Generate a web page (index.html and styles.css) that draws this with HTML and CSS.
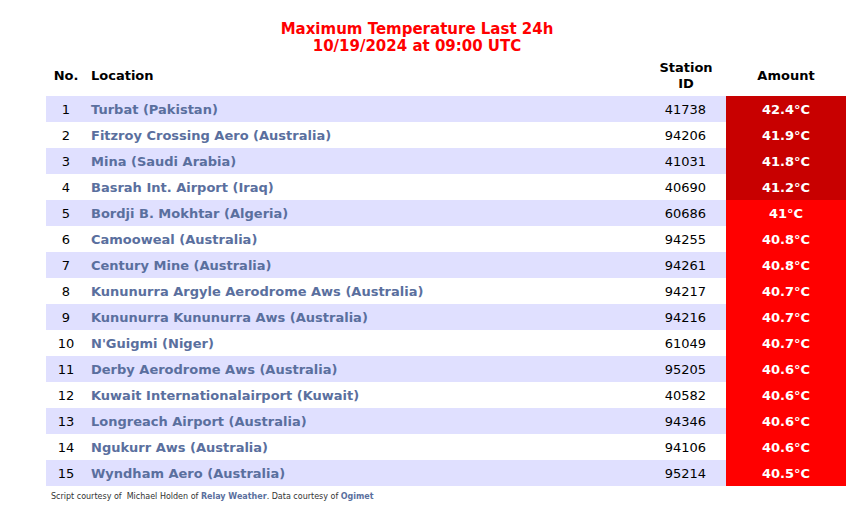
FILE: index.html
```html
<!DOCTYPE html>
<html>
<head>
<meta charset="utf-8">
<link rel="stylesheet" href="styles.css">
</head>
<body>
<div class="page">
  <h1 class="title">Maximum Temperature Last 24h<br>10/19/2024 at 09:00 UTC</h1>
  <table class="tbl">
    <thead>
      <tr>
        <th class="c-no">No.</th>
        <th class="c-loc">Location</th>
        <th class="c-id">Station<br>ID</th>
        <th class="c-amt">Amount</th>
      </tr>
    </thead>
    <tbody>
      <tr class="odd"><td class="c-no">1</td><td class="c-loc">Turbat (Pakistan)</td><td class="c-id">41738</td><td class="c-amt dark">42.4°C</td></tr>
      <tr><td class="c-no">2</td><td class="c-loc">Fitzroy Crossing Aero (Australia)</td><td class="c-id">94206</td><td class="c-amt dark">41.9°C</td></tr>
      <tr class="odd"><td class="c-no">3</td><td class="c-loc">Mina (Saudi Arabia)</td><td class="c-id">41031</td><td class="c-amt dark">41.8°C</td></tr>
      <tr><td class="c-no">4</td><td class="c-loc">Basrah Int. Airport (Iraq)</td><td class="c-id">40690</td><td class="c-amt dark">41.2°C</td></tr>
      <tr class="odd"><td class="c-no">5</td><td class="c-loc">Bordji B. Mokhtar (Algeria)</td><td class="c-id">60686</td><td class="c-amt">41°C</td></tr>
      <tr><td class="c-no">6</td><td class="c-loc">Camooweal (Australia)</td><td class="c-id">94255</td><td class="c-amt">40.8°C</td></tr>
      <tr class="odd"><td class="c-no">7</td><td class="c-loc">Century Mine (Australia)</td><td class="c-id">94261</td><td class="c-amt">40.8°C</td></tr>
      <tr><td class="c-no">8</td><td class="c-loc">Kununurra Argyle Aerodrome Aws (Australia)</td><td class="c-id">94217</td><td class="c-amt">40.7°C</td></tr>
      <tr class="odd"><td class="c-no">9</td><td class="c-loc">Kununurra Kununurra Aws (Australia)</td><td class="c-id">94216</td><td class="c-amt">40.7°C</td></tr>
      <tr><td class="c-no">10</td><td class="c-loc">N'Guigmi (Niger)</td><td class="c-id">61049</td><td class="c-amt">40.7°C</td></tr>
      <tr class="odd"><td class="c-no">11</td><td class="c-loc">Derby Aerodrome Aws (Australia)</td><td class="c-id">95205</td><td class="c-amt">40.6°C</td></tr>
      <tr><td class="c-no">12</td><td class="c-loc">Kuwait Internationalairport (Kuwait)</td><td class="c-id">40582</td><td class="c-amt">40.6°C</td></tr>
      <tr class="odd"><td class="c-no">13</td><td class="c-loc">Longreach Airport (Australia)</td><td class="c-id">94346</td><td class="c-amt">40.6°C</td></tr>
      <tr><td class="c-no">14</td><td class="c-loc">Ngukurr Aws (Australia)</td><td class="c-id">94106</td><td class="c-amt">40.6°C</td></tr>
      <tr class="odd"><td class="c-no">15</td><td class="c-loc">Wyndham Aero (Australia)</td><td class="c-id">95214</td><td class="c-amt">40.5°C</td></tr>
    </tbody>
  </table>
  <p class="credits">Script courtesy of &nbsp;Michael Holden of <b>Relay Weather</b>. Data courtesy of <b>Ogimet</b></p>
</div>
</body>
</html>
```
FILE: styles.css
```css
html, body {
  margin: 0;
  padding: 0;
  background: #ffffff;
}
body {
  font-family: "DejaVu Sans", Verdana, sans-serif;
  color: #000;
}
.page {
  padding: 21px 8px 0 46px;
}
.title {
  margin: 0;
  width: 742px;
  text-align: center;
  color: #ff0000;
  font-size: 15px;
  line-height: 17px;
  font-weight: bold;
}
.tbl {
  border-collapse: collapse;
  width: 800px;
  margin-top: 3px;
  font-size: 13px;
}
.tbl th {
  font-weight: bold;
  font-size: 13px;
  line-height: 16px;
  height: 36px;
  padding: 0 0 2px 0;
  vertical-align: middle;
}
.tbl td {
  height: 25px;
  padding: 1px 0 0 0;
  line-height: 16px;
  vertical-align: middle;
}
.c-no {
  width: 40px;
  text-align: center;
}
.c-loc {
  text-align: left;
  padding-left: 5px !important;
}
td.c-loc {
  font-weight: bold;
  color: #5a6f9e;
}
.c-id {
  width: 80px;
  text-align: center;
}
td.c-id {
  text-align: right;
  padding-right: 20px !important;
  width: 60px;
}
.c-amt {
  width: 120px;
  text-align: center;
}
td.c-amt {
  background: #ff0000;
  color: #ffffff;
  font-weight: bold;
}
tr.odd td {
  background: #e0e0ff;
}
tr td.c-amt {
  background: #ff0000;
}
tr td.c-amt.dark {
  background: #c80000;
}
.credits {
  margin: 6px 0 0 5px;
  font-size: 8px;
  color: #333;
}
.credits b {
  color: #5a6f9e;
}
```
